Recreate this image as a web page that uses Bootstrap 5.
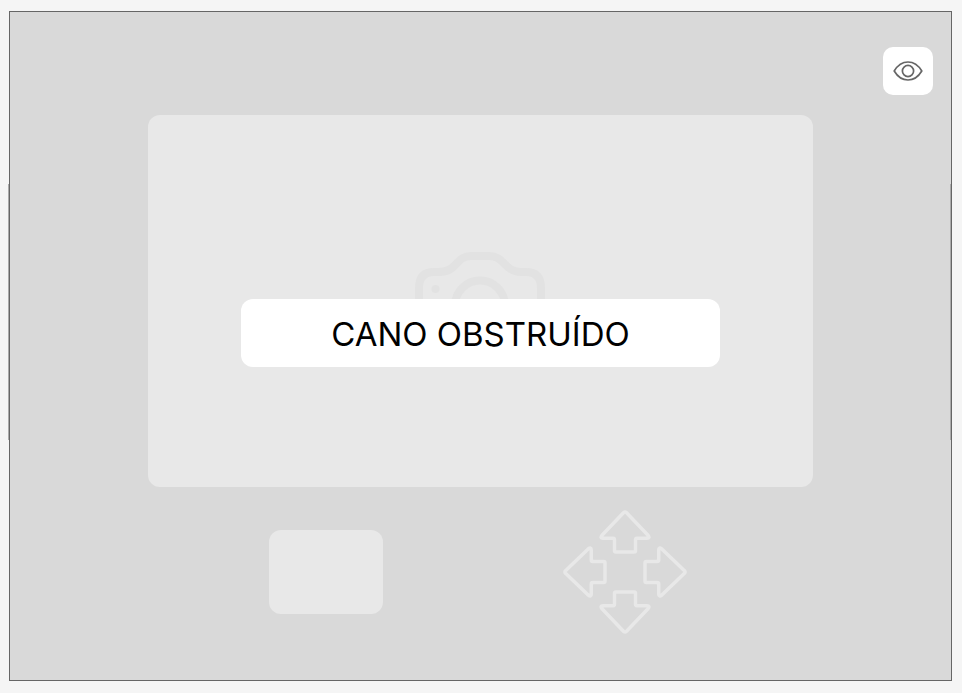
<!DOCTYPE html>
<html lang="pt-BR">
<head>
<meta charset="utf-8">
<meta name="viewport" content="width=device-width, initial-scale=1">
<title>Cano obstruído</title>
<link href="https://cdn.jsdelivr.net/npm/bootstrap@5.3.0/dist/css/bootstrap.min.css" rel="stylesheet">
<style>
  body { background: #f5f5f5; font-family: Inter, sans-serif; padding: 11px 10px 12px 9px; }
  .screen { background: #d9d9d9; border: 1px solid #666; min-height: calc(100vh - 23px); padding: 35px 18px 46px; }
  /* side rails beside the frame */
  .screen::before, .screen::after { content: ""; position: absolute; top: 172px; height: 256px; width: 1px; background: #aaa; }
  .screen::before { left: -2px; }
  .screen::after { right: 0; }
  .view-btn { width: 50px; height: 48px; border-radius: 10px; background: #fff; }
  .stage { width: 73.5%; margin-top: 20px; min-height: 372px; border-radius: 12px; background: #e8e8e8; }
  .camera { top: 136px; left: 50%; transform: translateX(-50%); }
  .notice { width: 72%; min-height: 68px; margin-top: 63px; padding-top: 2px; border-radius: 12px; background: #fff; color: #000; font-size: 33px; line-height: 40px; font-weight: 370; }
  .controls { width: 66%; margin-top: 23px; margin-right: 10px; }
  .pad-btn { width: 114px; height: 84px; border-radius: 12px; background: #e8e8e8; }
</style>
<script src="https://cdn.jsdelivr.net/npm/bootstrap@5.3.0/dist/js/bootstrap.bundle.min.js" defer></script>
</head>
<body>
<main class="screen position-relative d-flex flex-column align-items-center">
  <button type="button" class="view-btn btn border-0 p-0 align-self-end d-flex align-items-center justify-content-center" aria-label="Visualizar">
    <svg width="30" height="22" viewBox="0 0 30 22" fill="none" stroke="#666" stroke-width="1.7" stroke-linejoin="round" aria-hidden="true">
      <path d="M1.2 11C4.5 5.5 9.5 2 15 2S25.5 5.5 28.8 11C25.5 16.5 20.5 20 15 20S4.5 16.5 1.2 11Z"/>
      <circle cx="15" cy="11" r="5.6"/>
    </svg>
  </button>

  <section class="stage position-relative d-flex align-items-center justify-content-center">
    <svg class="camera position-absolute" width="132" height="96" viewBox="0 0 132 96" fill="none" stroke="#e2e2e2" stroke-width="8" aria-hidden="true">
      <path d="M5 76V37Q5 21 20 21H25C44 21 41 5 57 5H75C91 5 90 21 107 21H112Q127 21 127 37V76Q127 91 112 91H20Q5 91 5 76Z"/>
      <circle cx="66" cy="54.5" r="25"/>
      <circle cx="21.5" cy="38" r="4" fill="#e2e2e2" stroke="none"/>
    </svg>
    <div class="notice position-relative d-flex align-items-center justify-content-center text-center px-3" role="alert">CANO OBSTRUÍDO</div>
  </section>

  <div class="controls row g-0 align-items-center">
    <div class="col-6 d-flex justify-content-center">
      <button type="button" class="pad-btn btn border-0" aria-label="Capturar"></button>
    </div>
    <div class="col-6 d-flex justify-content-center">
      <button type="button" class="btn border-0 p-0 d-flex" aria-label="Mover câmera">
        <svg width="124" height="124" viewBox="0 0 124 124" fill="none" stroke="#e8e8e8" stroke-width="3.5" stroke-linejoin="round" aria-hidden="true">
          <defs>
            <path id="arrow" d="M60.7 2.5Q62 1.4 63.3 2.5L85 25.2Q87.300 28.300 84 28.300H74Q72.500 28.300 72.500 30V40.500Q72.500 42 71 42H53Q51.500 42 51.500 40.500V30Q51.500 28.300 50 28.300H40Q36.700 28.300 39 25.200Z"/>
          </defs>
          <use href="#arrow"/>
          <use href="#arrow" transform="rotate(90 62 62)"/>
          <use href="#arrow" transform="rotate(180 62 62)"/>
          <use href="#arrow" transform="rotate(270 62 62)"/>
        </svg>
      </button>
    </div>
  </div>
</main>
</body>
</html>
